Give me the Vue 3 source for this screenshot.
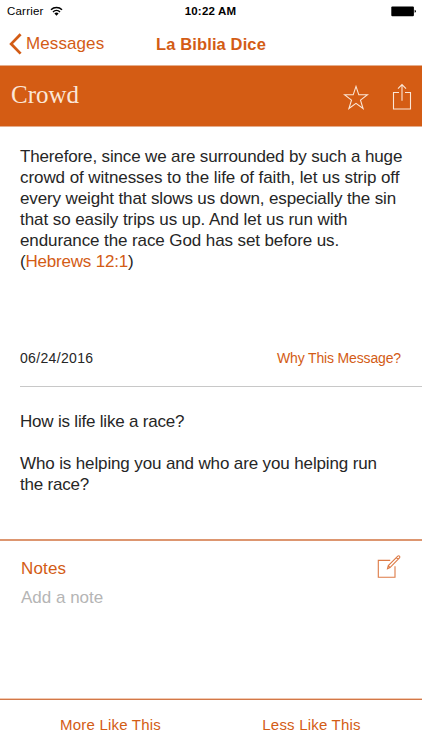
<template>
  <div class="screen">
    <header class="status-bar">
      <div class="carrier">
        <span>Carrier</span>
        <svg class="wifi" width="13" height="10" viewBox="0 0 13 10">
          <path d="M1 3.7a7.8 7.8 0 0 1 11 0M3 6a5 5 0 0 1 7 0" fill="none" stroke="#000" stroke-width="1.5" />
          <path d="M4.4 7.5a3 3 0 0 1 4.2 0L6.5 9.7z" />
        </svg>
      </div>
      <span class="clock">10:22 AM</span>
      <svg class="battery" width="26" height="11" viewBox="0 0 26 11">
        <rect x="0.3" y="0.4" width="22.6" height="9.8" rx="1" />
        <path d="M23.6 3.8q1.3.2 1.3 1.5t-1.3 1.5z" />
      </svg>
    </header>

    <nav class="nav-bar">
      <a class="back">
        <svg width="13" height="22" viewBox="0 0 13 22">
          <path d="M11.6 1.2L2.2 10.9L11.6 20.6" fill="none" stroke="currentColor" stroke-width="2.8" />
        </svg>
        <span>Messages</span>
      </a>
      <h1>La Biblia Dice</h1>
    </nav>

    <section class="banner">
      <h2>Crowd</h2>
      <div class="actions">
        <svg width="26" height="26" viewBox="0 0 26 26">
          <path d="M13 2.4L15.8 10.8H24.5L17.5 16.1L20.1 24.5L13 19.4L5.9 24.5L8.5 16.1L1.5 10.8H10.2Z" />
        </svg>
        <svg width="20" height="28" viewBox="0 0 20 28">
          <path d="M7 9.5H1.5V26H18.5V9.5H13M10 17.7V1.8M6 5.6L10 1.6L14 5.6" />
        </svg>
      </div>
    </section>

    <main class="message">
      <p class="verse">
        <span v-for="(line, i) in verse" :key="i" class="line" :class="`verse-${i + 1}`">{{ line }}</span>
        <span class="line verse-ref">(<a>Hebrews 12:1</a>)</span>
      </p>
      <div class="meta">
        <time>06/24/2016</time>
        <a>Why This Message?</a>
      </div>
      <div class="questions">
        <p class="short">How is life like a race?</p>
        <p>
          <span class="line">Who is helping you and who are you helping run</span>
          <span class="line short">the race?</span>
        </p>
      </div>
    </main>

    <section class="notes">
      <div>
        <h3>Notes</h3>
        <p>Add a note</p>
      </div>
      <svg width="26" height="26" viewBox="0 0 26 26">
        <path d="M14.2 6.4H2.3V23.3H19V12.2" />
        <path d="M11.5 14.7L12.3 11.6L21.8 2.1Q22.6 1.3 23.5 2.2Q24.3 3 23.5 3.8L14 13.6ZM20.3 3.5L22.1 5.3M12.3 11.6L14 13.6" />
      </svg>
    </section>

    <footer class="feedback">
      <button>More Like This</button>
      <button>Less Like This</button>
    </footer>
  </div>
</template>

<script setup>
const verse = [
  'Therefore, since we are surrounded by such a huge',
  'crowd of witnesses to the life of faith, let us strip off',
  'every weight that slows us down, especially the sin',
  'that so easily trips us up. And let us run with',
  'endurance the race God has set before us.'
]
</script>

<style>
body {
  margin: 0;
  background: #fff;
}
</style>

<style scoped>
.screen {
  display: flex;
  flex-direction: column;
  width: 422px;
  height: 750px;
  overflow: hidden;
  background: #fff;
  color: #262626;
  font-family: "Liberation Sans", Arial, sans-serif;
}

h1, h2, h3, p {
  margin: 0;
  font-weight: normal;
}

a, .notes, .feedback button, h1 {
  color: #d35c15;
}

.status-bar {
  display: grid;
  grid-template-columns: 1fr auto 1fr;
  align-items: center;
  height: 22px;
  padding: 0 5px 0 7px;
  box-sizing: border-box;
  color: #000;
  font-size: 11.5px;
  letter-spacing: 0.2px;
}

.carrier {
  display: flex;
  align-items: center;
  gap: 6px;
}

.clock {
  margin-right: 3px;
  font-weight: bold;
}

.battery {
  justify-self: end;
}

.nav-bar {
  display: grid;
  grid-template-columns: 1fr auto 1fr;
  align-items: center;
  height: 44px;
  padding: 0 9px;
  box-sizing: border-box;
}

.back {
  display: flex;
  align-items: center;
  gap: 4px;
  font-size: 17px;
  letter-spacing: 0.1px;
}

h1 {
  font-size: 16.5px;
  font-weight: bold;
  letter-spacing: 0.12px;
}

.banner {
  display: flex;
  justify-content: space-between;
  height: 60px;
  padding: 0 10px 0 11px;
  background: #d45c14;
  box-shadow: 0 0 0 1px #e5ad8c;
  color: #fbe6d6;
}

h2 {
  padding-top: 15px;
  font-family: "Liberation Serif", serif;
  font-size: 25px;
  line-height: 28px;
}

.actions {
  display: flex;
  align-items: center;
  gap: 23px;
  padding-top: 2px;
}

.actions path, .notes path {
  fill: none;
  stroke: currentColor;
  stroke-width: 1.1;
}

.message {
  height: 413px;
  padding-left: 20px;
  font-size: 17px;
  line-height: 21px;
}

.line {
  display: block;
  width: max-content;
  letter-spacing: -0.13px;
}

.verse {
  height: 200px;
  padding-top: 20px;
}

.verse-1 {
  letter-spacing: -0.145px;
}

.verse-2, .verse-4 {
  letter-spacing: -0.07px;
}

.verse-5 {
  letter-spacing: -0.1px;
}

.verse-ref, .short {
  letter-spacing: -0.2px;
}

.meta {
  display: flex;
  justify-content: space-between;
  height: 38px;
  padding: 2px 21px 0 0;
  border-bottom: 1px solid #c8c8c8;
  font-size: 14px;
}

.meta time {
  letter-spacing: 0.33px;
}

.meta a {
  letter-spacing: -0.15px;
}

.questions {
  display: flex;
  flex-direction: column;
  gap: 21px;
  padding-top: 24px;
}

.notes {
  display: flex;
  justify-content: space-between;
  height: 143px;
  padding: 14px 20px 0 21px;
  border-top: 2px solid #dd9670;
}

.notes svg {
  margin-top: -1px;
  color: #dd7a45;
}

h3 {
  font-size: 17px;
  line-height: 28px;
  letter-spacing: 0.15px;
}

.notes p {
  color: #b5b5b5;
  font-size: 17px;
  line-height: 30px;
}

.feedback {
  display: grid;
  grid-template-columns: 1fr 1fr;
  flex: 1;
  padding: 0 10px;
  border-top: 1px solid #f3c9b0;
  box-shadow: inset 0 1px #d27848;
}

.feedback button {
  padding: 0;
  border: 0;
  background: none;
  font: 15px "Liberation Sans", Arial, sans-serif;
  letter-spacing: 0.2px;
}
</style>
